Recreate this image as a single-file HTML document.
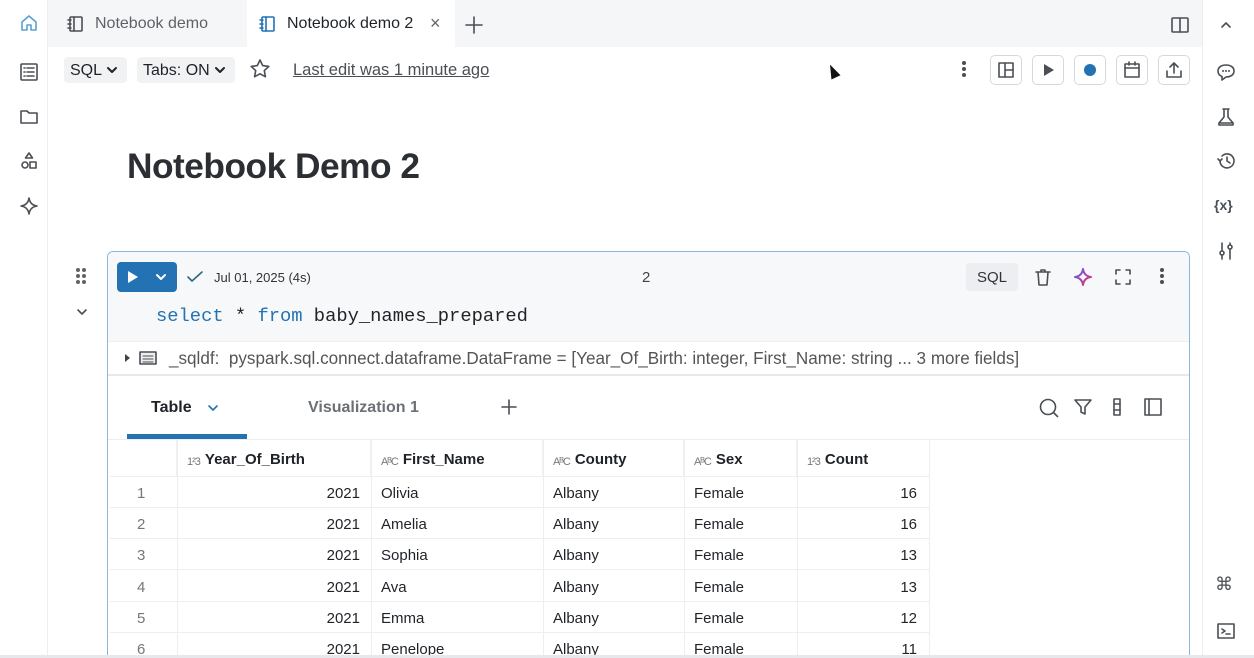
<!DOCTYPE html>
<html style="width:1254px;height:658px;overflow:hidden"><head><meta charset="utf-8">
<style>
*{box-sizing:border-box;margin:0;padding:0}
body{width:1254px;height:658px;overflow:hidden;background:#fff;font-family:"Liberation Sans",sans-serif;color:#1f2328;position:relative}
.a{position:absolute}
svg{position:absolute;fill:none;stroke:#4a4f55;stroke-width:1.6;stroke-linecap:round;stroke-linejoin:round}
.btn{position:absolute;width:32px;height:30px;border:1px solid #d5d9de;border-radius:5px;background:#fff}
.th{position:absolute;top:440px;height:37px;font-size:15px;font-weight:bold;line-height:40px;border-right:1px solid #eef0f2}
.tp{font-size:11px;color:#777;font-weight:normal;letter-spacing:-1px;margin-right:5px;position:relative;top:1px}
.r{position:absolute;left:110px;width:820px;height:31px;border-bottom:1px solid #eceef1;font-size:15px;line-height:34px}
.r span{position:absolute;top:0}
.r span.n{width:60px;text-align:right}
</style></head><body>
<div class="a" style="left:0;top:0;width:1254px;height:47px;background:#f4f6f8"></div>
<div class="a" style="left:0;top:0;width:48px;height:658px;background:#fff;border-right:1px solid #eceef1"></div>
<div class="a" style="left:1202px;top:0;width:52px;height:658px;background:#fff;border-left:1px solid #eceef1"></div>
<svg style="left:19px;top:13px" width="20" height="20" viewBox="0 0 20 20"><path d="M3 9L10 3l7 6v8h-5v-5h-4v5H3z" stroke="#5a9fd6"/></svg>
<svg style="left:66px;top:15px" width="18" height="18" viewBox="0 0 18 18"><rect x="4" y="2" width="12" height="14" rx="1"/><path d="M8 2v14M2 5h3M2 9h3M2 13h3"/></svg>
<div class="a" style="left:95px;top:15px;font-size:16px;color:#5f6368">Notebook demo</div>
<div class="a" style="left:247px;top:0;width:208px;height:47px;background:#fff"></div>
<svg style="left:258px;top:15px" width="18" height="18" viewBox="0 0 18 18"><g stroke="#2272b4"><rect x="4" y="2" width="12" height="14" rx="1"/><path d="M8 2v14M2 5h3M2 9h3M2 13h3"/></g></svg>
<div class="a" style="left:287px;top:15px;font-size:16px;color:#1f2328">Notebook demo 2</div>
<div class="a" style="left:430px;top:13px;font-size:18px;color:#666">×</div>
<svg style="left:464px;top:15px" width="20" height="20" viewBox="0 0 20 20"><path d="M10 2v16M2 10h16"/></svg>
<svg style="left:1170px;top:15px" width="20" height="20" viewBox="0 0 20 20"><rect x="2" y="3" width="16" height="14" rx="1"/><path d="M10 3v14"/></svg>
<svg style="left:1219px;top:20px" width="14" height="10" viewBox="0 0 14 10"><path d="M3 7l4-4 4 4"/></svg>
<svg style="left:19px;top:62px" width="20" height="20" viewBox="0 0 20 20"><rect x="2" y="2" width="16" height="16" rx="1"/><path d="M5 6h1M8 6h7M5 10h1M8 10h7M5 14h1M8 14h7"/></svg>
<svg style="left:19px;top:107px" width="20" height="20" viewBox="0 0 20 20"><path d="M2 4h6l2 2h8v10H2z"/></svg>
<svg style="left:19px;top:151px" width="20" height="20" viewBox="0 0 20 20"><path d="M10 2l3.5 5h-7z"/><circle cx="6" cy="14" r="3"/><rect x="11" y="11" width="6" height="6"/></svg>
<svg style="left:19px;top:196px" width="20" height="20" viewBox="0 0 20 20"><path d="M10 2Q11 9 18 10Q11 11 10 18Q9 11 2 10Q9 9 10 2z"/></svg>
<svg style="left:1216px;top:62px" width="20" height="20" viewBox="0 0 20 20"><path d="M10 3c5 0 8 2.5 8 6s-3 6-8 6l-4 3v-3.5C3.5 13.5 2 11.5 2 9c0-3.5 3-6 8-6z"/><path d="M7 9h0M10 9h0M13 9h0" stroke-width="2"/></svg>
<svg style="left:1216px;top:107px" width="20" height="20" viewBox="0 0 20 20"><path d="M7 2h6M8 2v8l-5 6h14l-5-6V2"/><path d="M3 16v2h14v-2"/></svg>
<svg style="left:1216px;top:151px" width="20" height="20" viewBox="0 0 20 20"><path d="M4 10a7 7 0 1 0 2-5"/><path d="M2 8l2 2 2-2M11 6v4l3 2"/></svg>
<div class="a" style="left:1214px;top:197px;font-size:14px;color:#4a4f55;font-weight:bold">{x}</div>
<svg style="left:1216px;top:241px" width="20" height="20" viewBox="0 0 20 20"><path d="M6 2v16M14 2v16"/><circle cx="6" cy="12" r="2" fill="#fff"/><circle cx="14" cy="6" r="2" fill="#fff"/></svg>
<div class="a" style="left:1215px;top:574px;font-size:18px;color:#4a4f55">⌘</div>
<svg style="left:1216px;top:621px" width="20" height="20" viewBox="0 0 20 20"><rect x="2" y="3" width="16" height="14"/><path d="M6 8l3 2-3 2M10 13h4"/></svg>
<div class="a" style="left:64px;top:57px;width:63px;height:26px;background:#f0f2f4;border-radius:4px;font-size:16px;line-height:27px;padding-left:6px">SQL</div>
<svg style="left:106px;top:65px" width="12" height="10" viewBox="0 0 12 10"><path d="M2 3l4 4 4-4" stroke="#1f2328" stroke-width="2"/></svg>
<div class="a" style="left:137px;top:57px;width:98px;height:26px;background:#f0f2f4;border-radius:4px;font-size:16px;line-height:27px;padding-left:6px">Tabs: ON</div>
<svg style="left:214px;top:65px" width="12" height="10" viewBox="0 0 12 10"><path d="M2 3l4 4 4-4" stroke="#1f2328" stroke-width="2"/></svg>
<svg style="left:249px;top:58px" width="22" height="22" viewBox="0 0 22 22"><path d="M11 2l2.7 5.6 6.1.8-4.5 4.2 1.1 6.1L11 15.8l-5.4 2.9 1.1-6.1L2.2 8.4l6.1-.8z"/></svg>
<div class="a" style="left:293px;top:61px;font-size:16.5px;color:#4a4f55;text-decoration:underline">Last edit was 1 minute ago</div>
<div class="a" style="left:828px;top:64px;width:0;height:0;border-left:5px solid transparent;border-right:5px solid transparent;border-bottom:14px solid #111;transform:rotate(-25deg)"></div>
<div class="a" style="left:962px;top:61px;width:4px;height:4px;border-radius:2px;background:#4a4f55;box-shadow:0 6px 0 #4a4f55,0 12px 0 #4a4f55"></div>
<div class="btn" style="left:990px;top:55px"></div>
<svg style="left:996px;top:60px" width="20" height="20" viewBox="0 0 20 20"><rect x="3" y="3" width="14" height="14"/><path d="M9 3v14M9 10h8"/></svg>
<div class="btn" style="left:1032px;top:55px"></div>
<div class="a" style="left:1044px;top:64px;width:0;height:0;border-left:10px solid #4a4f55;border-top:6px solid transparent;border-bottom:6px solid transparent"></div>
<div class="btn" style="left:1074px;top:55px"></div>
<div class="a" style="left:1084px;top:64px;width:12px;height:12px;border-radius:6px;background:#2272b4"></div>
<div class="btn" style="left:1116px;top:55px"></div>
<svg style="left:1122px;top:60px" width="20" height="20" viewBox="0 0 20 20"><rect x="3" y="4" width="14" height="13"/><path d="M3 8h14M7 2v3M13 2v3"/></svg>
<div class="btn" style="left:1158px;top:55px"></div>
<svg style="left:1164px;top:60px" width="20" height="20" viewBox="0 0 20 20"><path d="M10 13V3M6 7l4-4 4 4M3 11v6h14v-6"/></svg>
<div class="a" style="left:127px;top:147px;font-size:35.3px;font-weight:bold;color:#2b2f33;letter-spacing:-0.5px">Notebook Demo 2</div>
<div class="a" style="left:76px;top:268px;width:4px;height:4px;border-radius:2px;background:#5f6368;box-shadow:6px 0 0 #5f6368,0 6px 0 #5f6368,6px 6px 0 #5f6368,0 12px 0 #5f6368,6px 12px 0 #5f6368"></div>
<svg style="left:75px;top:307px" width="14" height="10" viewBox="0 0 14 10"><path d="M3 3l4 4 4-4"/></svg>
<div class="a" style="left:107px;top:251px;width:1083px;height:407px;border:1px solid #8fb4d9;border-bottom:none;border-radius:6px 6px 0 0;background:#fff"></div>
<div class="a" style="left:108px;top:252px;width:1081px;height:90px;background:#f7f8fa;border-radius:5px 5px 0 0;border-bottom:1px solid #eceef1"></div>
<div class="a" style="left:117px;top:262px;width:60px;height:30px;background:#2272b4;border-radius:4px"></div>
<div class="a" style="left:128px;top:271px;width:0;height:0;border-left:10px solid #fff;border-top:6px solid transparent;border-bottom:6px solid transparent"></div>
<svg style="left:154px;top:272px" width="14" height="10" viewBox="0 0 14 10"><path d="M3 3l4 4 4-4" stroke="#fff" stroke-width="2"/></svg>
<svg style="left:186px;top:269px" width="18" height="16" viewBox="0 0 18 16"><path d="M2 8l4 4 10-9" stroke="#2a6a7a"/></svg>
<div class="a" style="left:214px;top:270px;font-size:13px;color:#333">Jul 01, 2025 (4s)</div>
<div class="a" style="left:642px;top:269px;font-size:15px;color:#444">2</div>
<div class="a" style="left:966px;top:263px;width:52px;height:28px;background:#eceef1;border-radius:4px;font-size:15px;line-height:30px;text-align:center;color:#333">SQL</div>
<svg style="left:1033px;top:267px" width="20" height="20" viewBox="0 0 20 20"><path d="M3 5h14M8 5V3h4v2M5 5l1 13h8l1-13"/></svg>
<svg style="left:1073px;top:267px" width="20" height="20" viewBox="0 0 20 20"><defs><linearGradient id="g" x1="0" y1="0" x2="1" y2="1"><stop offset="0" stop-color="#5b5bf0"/><stop offset="1" stop-color="#e8336b"/></linearGradient></defs><path d="M10 2Q11 9 18 10Q11 11 10 18Q9 11 2 10Q9 9 10 2z" stroke="url(#g)" stroke-width="2"/></svg>
<svg style="left:1113px;top:267px" width="20" height="20" viewBox="0 0 20 20"><path d="M3 7V3h4M13 3h4v4M17 13v4h-4M7 17H3v-4"/></svg>
<div class="a" style="left:1160px;top:268px;width:4px;height:4px;border-radius:2px;background:#4a4f55;box-shadow:0 6px 0 #4a4f55,0 12px 0 #4a4f55"></div>
<div class="a" style="left:156px;top:305px;font-family:'Liberation Mono',monospace;font-size:18.8px;color:#1f2328;white-space:pre"><span style="color:#2272b4">select</span> * <span style="color:#2272b4">from</span> baby_names_prepared</div>
<div class="a" style="left:125px;top:354px;width:0;height:0;border-left:5px solid #444;border-top:4px solid transparent;border-bottom:4px solid transparent"></div>
<svg style="left:139px;top:351px" width="18" height="14" viewBox="0 0 18 14"><rect x="1" y="1" width="16" height="12" fill="#eee"/><path d="M4 5h10M4 8h10M4 11h10" stroke-width="1"/></svg>
<div class="a" style="left:169px;top:349px;font-size:17.1px;color:#555;white-space:pre">_sqldf:  pyspark.sql.connect.dataframe.DataFrame = [Year_Of_Birth: integer, First_Name: string ... 3 more fields]</div>
<div class="a" style="left:108px;top:374px;width:1081px;height:2px;background:#e6e8eb"></div>
<div class="a" style="left:151px;top:399px;font-size:16px;font-weight:bold;color:#1f2328">Table</div>
<svg style="left:206px;top:403px" width="14" height="10" viewBox="0 0 14 10"><path d="M3 3l4 4 4-4" stroke="#2272b4"/></svg>
<div class="a" style="left:127px;top:434px;width:120px;height:5px;background:#2272b4"></div>
<div class="a" style="left:308px;top:399px;font-size:16px;font-weight:bold;color:#6b7075">Visualization 1</div>
<svg style="left:500px;top:398px" width="18" height="18" viewBox="0 0 18 18"><path d="M9 2v14M2 9h14"/></svg>
<svg style="left:1038px;top:397px" width="22" height="22" viewBox="0 0 22 22"><circle cx="10" cy="10" r="7.5"/><path d="M15.5 15.5l4 4"/></svg>
<svg style="left:1073px;top:397px" width="20" height="20" viewBox="0 0 20 20"><path d="M2 3h16l-6 7v7l-4-2v-5z"/></svg>
<svg style="left:1110px;top:397px" width="14" height="20" viewBox="0 0 14 20"><rect x="4" y="2" width="6" height="16"/><path d="M4 7h6M4 13h6"/></svg>
<svg style="left:1143px;top:397px" width="20" height="20" viewBox="0 0 20 20"><rect x="2" y="2" width="16" height="16"/><path d="M6 2v16"/></svg>
<div class="a" style="left:108px;top:439px;width:1081px;height:1px;background:#eceef1"></div>
<div class="a" style="left:110px;top:440px;width:820px;height:37px;border-bottom:1px solid #eceef1"></div>
<div class="th" style="left:110px;width:67px"></div>
<div class="th" style="left:177px;width:194px;padding-left:10px"><span class="tp">1²3</span>Year_Of_Birth</div>
<div class="th" style="left:371px;width:172px;padding-left:10px"><span class="tp">AᴮC</span>First_Name</div>
<div class="th" style="left:543px;width:141px;padding-left:10px"><span class="tp">AᴮC</span>County</div>
<div class="th" style="left:684px;width:113px;padding-left:10px"><span class="tp">AᴮC</span>Sex</div>
<div class="th" style="left:797px;width:133px;padding-left:10px"><span class="tp">1²3</span>Count</div>
<div class="r" style="top:477px"><span style="left:27px;color:#777">1</span><span class="n" style="left:190px">2021</span><span style="left:271px">Olivia</span><span style="left:443px">Albany</span><span style="left:584px">Female</span><span class="n" style="left:747px">16</span></div>
<div class="r" style="top:508px"><span style="left:27px;color:#777">2</span><span class="n" style="left:190px">2021</span><span style="left:271px">Amelia</span><span style="left:443px">Albany</span><span style="left:584px">Female</span><span class="n" style="left:747px">16</span></div>
<div class="r" style="top:539px"><span style="left:27px;color:#777">3</span><span class="n" style="left:190px">2021</span><span style="left:271px">Sophia</span><span style="left:443px">Albany</span><span style="left:584px">Female</span><span class="n" style="left:747px">13</span></div>
<div class="r" style="top:571px"><span style="left:27px;color:#777">4</span><span class="n" style="left:190px">2021</span><span style="left:271px">Ava</span><span style="left:443px">Albany</span><span style="left:584px">Female</span><span class="n" style="left:747px">13</span></div>
<div class="r" style="top:602px"><span style="left:27px;color:#777">5</span><span class="n" style="left:190px">2021</span><span style="left:271px">Emma</span><span style="left:443px">Albany</span><span style="left:584px">Female</span><span class="n" style="left:747px">12</span></div>
<div class="r" style="top:633px;height:25px;border-bottom:none;overflow:hidden"><span style="left:27px;color:#777">6</span><span class="n" style="left:190px">2021</span><span style="left:271px">Penelope</span><span style="left:443px">Albany</span><span style="left:584px">Female</span><span class="n" style="left:747px">11</span></div>
<div class="a" style="left:177px;top:440px;width:1px;height:218px;background:#eceef1"></div>
<div class="a" style="left:371px;top:440px;width:1px;height:218px;background:#eceef1"></div>
<div class="a" style="left:543px;top:440px;width:1px;height:218px;background:#eceef1"></div>
<div class="a" style="left:684px;top:440px;width:1px;height:218px;background:#eceef1"></div>
<div class="a" style="left:797px;top:440px;width:1px;height:218px;background:#eceef1"></div>
<div class="a" style="left:929px;top:440px;width:1px;height:218px;background:#eceef1"></div>
<div class="a" style="left:0;top:655px;width:1254px;height:3px;background:#e6e8eb"></div>
</body></html>
